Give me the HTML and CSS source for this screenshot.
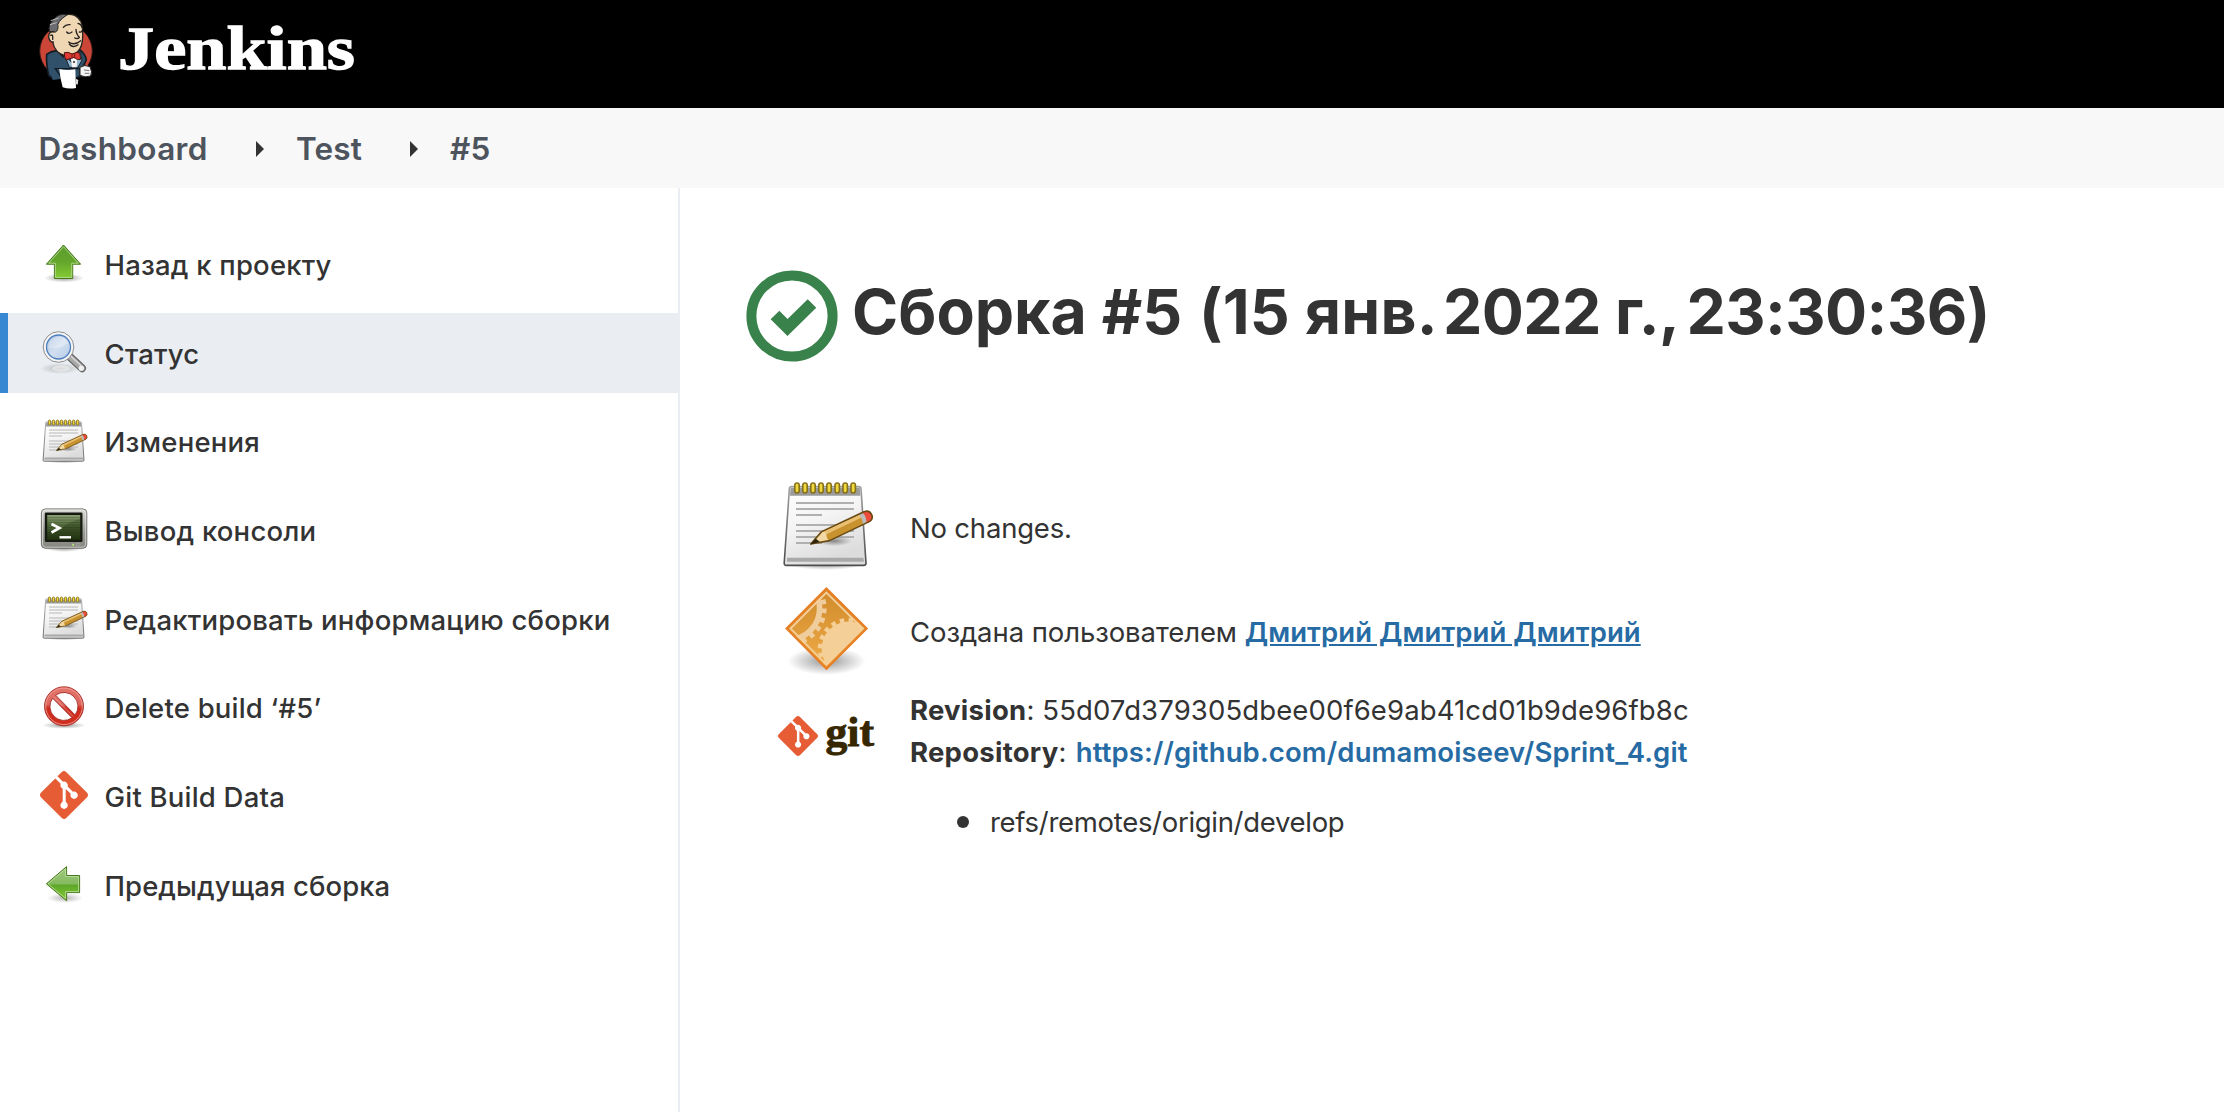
FILE: index.html
```html
<!DOCTYPE html>
<html lang="ru">
<head>
<meta charset="utf-8">
<title>Test #5 [Jenkins]</title>
<link rel="stylesheet" href="styles.css">
</head>
<body>
<svg class="defs" width="0" height="0" aria-hidden="true">
  <defs>
    <linearGradient id="green" x1="0" y1="0" x2="0" y2="1"><stop offset="0" stop-color="#5c9c2c"/><stop offset=".5" stop-color="#64a52c"/><stop offset="1" stop-color="#86cc33"/></linearGradient>
    <linearGradient id="green2" x1="0" y1="0" x2="0" y2="1"><stop offset="0" stop-color="#a3cb85"/><stop offset=".5" stop-color="#84b95e"/><stop offset=".55" stop-color="#5fa728"/><stop offset="1" stop-color="#84cc33"/></linearGradient>
    <radialGradient id="shade"><stop offset="0" stop-color="#000" stop-opacity=".42"/><stop offset=".5" stop-color="#000" stop-opacity=".2"/><stop offset="1" stop-color="#000" stop-opacity="0"/></radialGradient>
    <linearGradient id="paper" x1="0" y1="0" x2=".4" y2="1"><stop offset="0" stop-color="#fff"/><stop offset=".5" stop-color="#f4f4f4"/><stop offset="1" stop-color="#dcdcdc"/></linearGradient>
    <linearGradient id="edge" x1="0" y1="0" x2="0" y2="1"><stop offset="0" stop-color="#a0a0a0"/><stop offset="1" stop-color="#4c4e4b"/></linearGradient>
    <linearGradient id="lens" x1="0" y1="0" x2="1" y2="1"><stop offset="0" stop-color="#a9c2e0"/><stop offset=".5" stop-color="#d2dff0"/><stop offset="1" stop-color="#b4cbe6"/></linearGradient>
    <linearGradient id="red" x1="0" y1="0" x2="0" y2="1"><stop offset="0" stop-color="#e5766d"/><stop offset=".45" stop-color="#dc665d"/><stop offset=".55" stop-color="#cd2a1d"/><stop offset="1" stop-color="#d33021"/></linearGradient>
    <linearGradient id="case" x1="0" y1="0" x2="0" y2="1"><stop offset="0" stop-color="#dcdcd8"/><stop offset=".6" stop-color="#9a9b96"/><stop offset="1" stop-color="#85867f"/></linearGradient>
    <linearGradient id="screen" x1="0" y1="0" x2="0" y2="1"><stop offset="0" stop-color="#8ba074"/><stop offset=".5" stop-color="#4a6334"/><stop offset="1" stop-color="#23350f"/></linearGradient>
    <linearGradient id="amber" x1="0" y1="0" x2="0" y2="1"><stop offset="0" stop-color="#cf8a2b"/><stop offset="1" stop-color="#efac47"/></linearGradient>
    <clipPath id="diamond"><path d="M24.2 5.6 43.1 24.3 24.2 43 5.4 24.3Z"/></clipPath>
    <symbol id="notepad" viewBox="0 0 48 48">
      <ellipse cx="24" cy="43.5" rx="19" ry="3" fill="url(#shade)"/>
      <path d="M6.7 4.8H40.4Q41.4 4.8 41.5 5.8L44 43Q44 44.2 42.8 44.2H4.2Q3 44.2 3.1 43L5.7 5.8Q5.8 4.8 6.7 4.8Z" fill="url(#paper)" stroke="url(#edge)" stroke-width=".8"/>
      <path d="M6.3 5.4H40.9L41.2 9.4H6Z" fill="#9b9b9b"/>
      <path d="M4.6 40.4H42.7L43 42.4H4.4Z" fill="#a9a9a9"/>
      <path d="M9 13H38M9 16H38M9 19H22M9 24H38M9 27H38M9 30H38M9 33H22" stroke="#b0b0b0" stroke-width=".9"/>
      <g fill="#f0d83c" stroke="#86701a" stroke-width=".8"><rect x="8.4" y="3" width="2.2" height="5" rx="1.1"/><rect x="12.4" y="3" width="2.2" height="5" rx="1.1"/><rect x="16.4" y="3" width="2.2" height="5" rx="1.1"/><rect x="20.4" y="3" width="2.2" height="5" rx="1.1"/><rect x="24.4" y="3" width="2.2" height="5" rx="1.1"/><rect x="28.5" y="3" width="2.2" height="5" rx="1.1"/><rect x="32.5" y="3" width="2.2" height="5" rx="1.1"/><rect x="36.5" y="3" width="2.2" height="5" rx="1.1"/></g>
      <ellipse cx="28" cy="32" rx="9" ry="2.6" fill="url(#shade)"/>
      <path d="M16.4 33.5 21.8 27.3 43 17.4Q45.5 16.4 46.7 18.6T45.9 22.2L25.8 31.8Z" fill="#c8922f"/>
      <path d="M22 27.6 41 18.5 41.8 20.2 23.5 29Z" fill="#e9bf72"/>
      <path d="M16.4 33.5 21.8 27.3Q24.2 27.6 24.3 29.4T25.8 31.8Z" fill="#f2d9a4"/>
      <path d="M40.2 18.7 43 17.4 44.8 22.7 42.4 23.8Q42.4 20.5 40.2 18.7Z" fill="#bcbcbc"/>
      <path d="M42.2 17.8 43.4 17.3Q45.6 16.5 46.7 18.6T45.9 22.2L44.3 23Q44.2 19.6 42.2 17.8Z" fill="#ee4b3b"/>
      <path d="M16.4 33.5 21.8 27.3 43 17.4Q45.5 16.4 46.7 18.6T45.9 22.2L25.8 31.8Z" fill="none" stroke="#6b4a12" stroke-width=".8" stroke-linejoin="round"/>
      <path d="M16.2 33.7 18.8 30.8 20.8 32.4Z" fill="#2c240f"/>
    </symbol>
    <symbol id="git-mark" viewBox="0 0 24 24"><path fill="#e65c35" d="M23.546 10.93L13.067.452c-.604-.603-1.582-.603-2.188 0L8.708 2.627l2.76 2.76c.645-.215 1.379-.07 1.889.441.516.515.658 1.258.438 1.9l2.658 2.66c.645-.223 1.387-.078 1.9.435.721.72.721 1.884 0 2.604-.719.719-1.881.719-2.6 0-.539-.541-.674-1.337-.404-1.996L12.86 8.955v6.525c.176.086.342.203.488.348.713.721.713 1.883 0 2.6-.719.721-1.889.721-2.609 0-.719-.719-.719-1.879 0-2.598.182-.18.387-.316.605-.406V8.835c-.217-.091-.424-.222-.6-.401-.545-.545-.676-1.342-.396-2.009L7.636 3.7.45 10.881c-.6.605-.6 1.584 0 2.189l10.48 10.477c.604.604 1.582.604 2.186 0l10.43-10.43c.605-.603.605-1.582 0-2.187"/></symbol>
  </defs>
</svg>

<header class="header">
  <svg class="butler" viewBox="0 0 225 255">
    <ellipse cx="108" cy="123" rx="79" ry="79" fill="#cc4637" stroke="#2b1613" stroke-width="3"/>
    <path d="M50 133Q62 124 80 122L100 140 150 120Q166 132 169 150L158 172 150 200 90 204Q68 208 56 196 48 160 50 133Z" fill="#31506a" stroke="#131c24" stroke-width="5" stroke-linejoin="round"/>
    <path d="M62 190 68 210 90 207 88 176Z" fill="#31506a"/>
    <path d="M104 136 126 158 150 126 156 150 144 172H118Z" fill="#8fb4cc" stroke="#18222b" stroke-width="3"/>
    <path d="M122 140H142L140 172H126Z" fill="#f4f4f4"/>
    <path d="M66 66Q60 86 68 96 74 128 106 138 136 140 150 116 160 98 158 62 158 28 134 16 108 8 84 24 64 40 66 66Z" fill="#efd7b4" stroke="#26221f" stroke-width="4"/>
    <path d="M112 14Q84 8 68 32 54 44 58 64L70 68Q84 66 84 52 78 36 112 14Z" fill="#6b6b70" stroke="#222" stroke-width="3"/>
    <path d="M62 32 86 24M60 44 80 38" stroke="#bbb" stroke-width="3"/>
    <path d="M74 66Q56 62 56 80 58 98 72 96" fill="#efd7b4" stroke="#26221f" stroke-width="4"/>
    <path d="M62 76Q70 72 68 88M100 52Q108 42 120 44M144 40Q154 42 156 52M110 66Q116 74 126 66M148 66Q154 68 156 62M138 58Q138 72 148 82 144 88 134 84M116 96Q134 108 152 92M118 102Q128 116 144 104" fill="none" stroke="#26221f" stroke-width="4" stroke-linecap="round"/>
    <path d="M103 128Q114 124 126 132L144 126Q152 132 152 148 142 152 132 142L108 150Q102 140 103 128Z" fill="#dc3a32" stroke="#4b1512" stroke-width="3"/>
    <path d="M126 130V146M134 130V145" stroke="#7b1a16" stroke-width="3"/>
    <circle cx="132" cy="156" r="3" fill="#222"/>
    <path d="M76 176H150V198L136 204H96Z" fill="#31506a" stroke="#131c24" stroke-width="4"/>
    <path d="M150 172Q164 162 180 170 188 186 182 198 166 204 150 196Z" fill="#f3f3f3" stroke="#26221f" stroke-width="3"/>
    <path d="M162 180 178 182M164 190 178 190" stroke="#777" stroke-width="3"/>
    <path d="M88 177Q110 182 136 178L138 234Q116 238 98 232 90 204 88 177Z" fill="#fff"/>
    <path d="M138 206 145 210 143 224 138 222Z" fill="#ddd"/>
  </svg>
  <svg class="wordmark" width="240" height="70" viewBox="0 0 240 70"><text x="0" y="55" textLength="237" lengthAdjust="spacingAndGlyphs">Jenkins</text></svg>
</header>

<nav class="crumbs">
  <span class="crumb c1">Dashboard</span><i class="caret"></i><span class="crumb c2">Test</span><i class="caret"></i><span class="crumb c3">#5</span>
</nav>

<div class="page">
  <aside class="side">
    <div class="task">
      <svg class="icon" viewBox="0 0 48 48"><ellipse cx="24" cy="39" rx="20" ry="4.5" fill="url(#shade)"/><path d="M23.5 6 40.6 25.2H32.7V39.5H14.4V25.2H6.4Z" fill="url(#green)" stroke="#44761a"/><path d="M23.5 7.7 38.4 24.2H31.7V38.5H15.4V24.2H8.7Z" fill="none" stroke="#b4d890" stroke-width=".9"/></svg>
      <span class="label">Назад к проекту</span>
    </div>
    <div class="task active">
      <svg class="icon" viewBox="0 0 48 48"><ellipse cx="20" cy="40.5" rx="20" ry="5.5" fill="url(#shade)" opacity=".6"/><ellipse cx="21" cy="40.5" rx="9" ry="3" fill="#fff" opacity=".5"/><path d="M29.5 28.5 42 40.2" stroke="#666" stroke-width="8" stroke-linecap="round"/><path d="M29.5 28.5 42 40.2" stroke="#a8a8a8" stroke-width="5.6" stroke-linecap="round"/><path d="M31 28.3 41 37.5" stroke="#d8d8d8" stroke-width="1.5"/><circle cx="41.3" cy="40.2" r="2.6" fill="#f0f0f0"/><circle cx="18.5" cy="19" r="15.3" fill="#f5f5f5" stroke="#8d8d8d" stroke-width="1"/><circle cx="18.5" cy="19" r="12" fill="url(#lens)" stroke="#4d7fbd" stroke-width="1.3"/><path d="M8.5 20Q8.5 10.5 17.5 9 26 8.5 28 15 20 22 8.5 20Z" fill="#fff" opacity=".3"/></svg>
      <span class="label">Статус</span>
    </div>
    <div class="task">
      <svg class="icon"><use href="#notepad"/></svg>
      <span class="label">Изменения</span>
    </div>
    <div class="task">
      <svg class="icon" viewBox="0 0 48 48"><ellipse cx="24" cy="43" rx="20" ry="4" fill="url(#shade)"/><rect x="1.4" y="3.9" width="45.4" height="39.4" rx="4" fill="url(#case)" stroke="#686964" stroke-width=".9"/><rect x="2.5" y="5" width="43.2" height="37.2" rx="3" fill="none" stroke="#efefec" stroke-width=".9" opacity=".7"/><rect x="4.8" y="7.6" width="37.7" height="29.4" rx="1.2" fill="#161a10"/><rect x="7.2" y="10" width="33" height="24.8" fill="url(#screen)"/><path d="M7.2 12.5H40.2M7.2 15H40.2M7.2 17.5H40.2M7.2 20H40.2M7.2 22.5H40.2M7.2 25H40.2M7.2 27.5H40.2" stroke="#1c2a0f" stroke-width=".7" opacity=".35"/><path d="M40.2 14Q28 17 22 23L7.2 27V34.8H40.2Z" fill="#16240a" opacity=".25"/><path d="M11.5 19 19.5 23 11.5 27.5" fill="none" stroke="#fff" stroke-width="2.6"/><path d="M19.5 32.3H31" stroke="#fff" stroke-width="2.4"/><rect x="32.3" y="38.8" width="1.6" height="2" fill="#b7f06c"/><rect x="36" y="38.6" width="4" height="2.4" rx=".6" fill="none" stroke="#aaa" stroke-width=".7"/></svg>
      <span class="label">Вывод консоли</span>
    </div>
    <div class="task">
      <svg class="icon"><use href="#notepad"/></svg>
      <span class="label">Редактировать информацию сборки</span>
    </div>
    <div class="task">
      <svg class="icon" viewBox="0 0 48 48"><ellipse cx="24" cy="42.3" rx="22" ry="3.5" fill="url(#shade)"/><circle cx="24" cy="23.3" r="15" fill="#fff"/><path fill-rule="evenodd" d="M24 3.8A19.5 19.5 0 1 1 24 42.8 19.5 19.5 0 0 1 24 3.8ZM15.6 12.2 35.1 31.9A14 14 0 0 0 15.6 12.2ZM12.6 15.2A14 14 0 0 0 32.1 34.8Z" fill="url(#red)" stroke="#a02a22" stroke-width=".9"/><circle cx="24" cy="23.3" r="18.3" fill="none" stroke="#f0a59e" stroke-width=".8"/><path d="M14 14.2 33 33.4" stroke="#eea49d" stroke-width=".7"/></svg>
      <span class="label">Delete build ‘#5’</span>
    </div>
    <div class="task">
      <svg class="icon"><use href="#git-mark"/></svg>
      <span class="label">Git Build Data</span>
    </div>
    <div class="task">
      <svg class="icon" viewBox="0 0 48 48"><ellipse cx="25" cy="38" rx="18" ry="5" fill="url(#shade)" opacity=".7"/><path d="M6.4 23.8 26.6 6.6V15.5H39.6V32.6H26.6V40.8Z" fill="url(#green2)" stroke="#44761a"/><path d="M8 23.8 25.6 8.8V16.5H38.6V31.6H25.6V38.6Z" fill="none" stroke="#b9dc97" stroke-width=".9"/></svg>
      <span class="label previous">Предыдущая сборка</span>
    </div>
  </aside>

  <main class="main">
    <h1 class="title">
      <svg class="status" viewBox="0 0 92 92"><circle cx="46" cy="46" r="40.6" fill="none" stroke="#3a824c" stroke-width="10"/><path d="M29 45 41.5 57.5 66 33.5" fill="none" stroke="#3a824c" stroke-width="12.2"/></svg>
      <span class="name">Сборка #5 <span class="day">(15 янв.</span><span class="year"> 2022 г.,</span><span class="time"> 23:30:36)</span></span>
    </h1>
    <section class="row">
      <svg class="big"><use href="#notepad"/></svg>
      <p class="text low changes">No changes.</p>
    </section>
    <section class="row">
      <svg class="big" viewBox="0 0 48 48"><ellipse cx="24.3" cy="40.5" rx="19.5" ry="7" fill="url(#shade)"/><path d="M24.2 4.3 44.3 24.3 24.2 44.3 4.3 24.3Z" fill="url(#amber)" stroke="#e87f24" stroke-width="1.1"/>
        <g clip-path="url(#diamond)" fill="none" stroke="#f0cd9c"><circle cx="5.2" cy="14.2" r="15.6" stroke-width="2.8"/><circle cx="5.2" cy="14.2" r="17.8" stroke-width="2.6" stroke-dasharray="2.4 2.26"/><circle cx="35.2" cy="34.2" r="13.4" fill="#f4cf97" stroke="none"/><circle cx="35.2" cy="34.2" r="14" stroke-width="2.6" stroke="#f4cf97" stroke-dasharray="2.2 2.2"/></g>
        <path d="M24.2 6.3 42.3 24.3 24.2 42.3 6.3 24.3Z" fill="none" stroke="#f7cf9b" stroke-width=".9"/></svg>
      <p class="text low"><span class="by">Создана пользователем</span> <a class="user" href="#">Дмитрий Дмитрий Дмитрий</a></p>
    </section>
    <section class="row git">
      <svg class="gitlogo" viewBox="0 0 96 46"><use href="#git-mark" width="40" height="40"/><text x="47.5" y="29.5" textLength="48.5" lengthAdjust="spacingAndGlyphs">git</text></svg>
      <div class="text">
        <p><b>Revision</b><span class="hash">: 55d07d379305dbee00f6e9ab41cd01b9de96fb8c</span></p>
        <p><b>Repository</b>: <a class="repo" href="#">https://github.com/dumamoiseev/Sprint_4.git</a></p>
        <ul><li><span class="ref">refs/remotes/origin/develop</span></li></ul>
      </div>
    </section>
  </main>
</div>
</body>
</html>
```
FILE: styles.css
```css
* { box-sizing: border-box; }
body { margin: 0; width: 2224px; height: 1112px; overflow: hidden; background: #fff; color: #333; font: 400 27.5px/42px Inter, "Liberation Sans", sans-serif; }
p, ul, h1 { margin: 0; }
.defs { display: block; height: 0; }
.header { display: flex; height: 108px; padding: 10px 0 0 30px; background: #000; }
.butler { width: 75px; height: 85px; }
.wordmark { margin: 4px 0 0 13px; }
.wordmark text { font: bold 61px "Liberation Serif", serif; fill: #fff; stroke: #fff; stroke-width: 1.3px; }
.crumbs { display: flex; align-items: center; height: 80px; padding: 2px 0 0 38.5px; background: #f8f8f8; color: #4d545d; font-size: 31.5px; font-weight: 600; letter-spacing: .2px; }
.crumb { width: 169.5px; white-space: nowrap; }
.c1 { letter-spacing: .35px; }
.c2 { width: 66px; }
.caret { width: 8px; height: 16px; margin: 0 32px 0 48px; background: #333; clip-path: polygon(0 0, 100% 50%, 0 100%); }
.page { display: flex; height: 924px; }
.side { display: flex; flex-direction: column; gap: 8.66px; width: 680px; padding-top: 36.3px; border-right: 2px solid #eaeef2; }
.task { display: flex; align-items: center; height: 80px; padding-left: 40px; font-weight: 500; letter-spacing: .21px; white-space: nowrap; }
.task.active { background: #eaeef2; box-shadow: inset 8px 0 #3788d3; }
.icon { width: 48px; height: 48px; margin: -2px 16.5px 0 0; flex: none; }
.label { padding-top: 1.4px; }
.previous { letter-spacing: .08px; }
.main { flex: 1; padding: 82px 0 0 66px; }
.title { display: flex; align-items: center; height: 92px; margin-bottom: 115px; font-size: 62.5px; font-weight: 700; line-height: 80px; white-space: nowrap; }
.status { width: 92px; height: 92px; margin-right: 14px; }
.name { margin-top: -10px; }
.day { margin-left: 2px; letter-spacing: .2px; }
.year { margin-left: -9px; letter-spacing: -.6px; }
.time { margin-left: -7px; letter-spacing: -.6px; }
.row { display: flex; align-items: center; gap: 36px; height: 96px; margin: 0 0 7px 32px; }
.big { width: 96px; height: 96px; flex: none; }
.low { padding-top: 7px; }
.changes { padding-top: 5px; letter-spacing: -.2px; }
.by { letter-spacing: -.08px; }
a { color: #266ba3; font-weight: 600; text-decoration: none; }
.user { text-decoration: underline; letter-spacing: .06px; }
b { font-weight: 700; letter-spacing: .25px; }
.hash { letter-spacing: .12px; }
.repo { margin-left: 1.5px; letter-spacing: .14px; }
.ref { letter-spacing: -.3px; }
.git { align-items: flex-start; height: auto; margin-top: 13px; }
.gitlogo { width: 96px; height: 46px; margin-top: 27px; flex: none; overflow: visible; }
.gitlogo text { font: bold 42px "Liberation Serif", serif; fill: #362701; stroke: #362701; stroke-width: .9px; }
ul { padding: 0 0 0 80px; margin-top: 28px; list-style: none; }
li { display: flex; align-items: center; }
li::before { content: ""; width: 12px; height: 12px; margin: 0 21px 0 -33px; border-radius: 50%; background: #333; }
```
